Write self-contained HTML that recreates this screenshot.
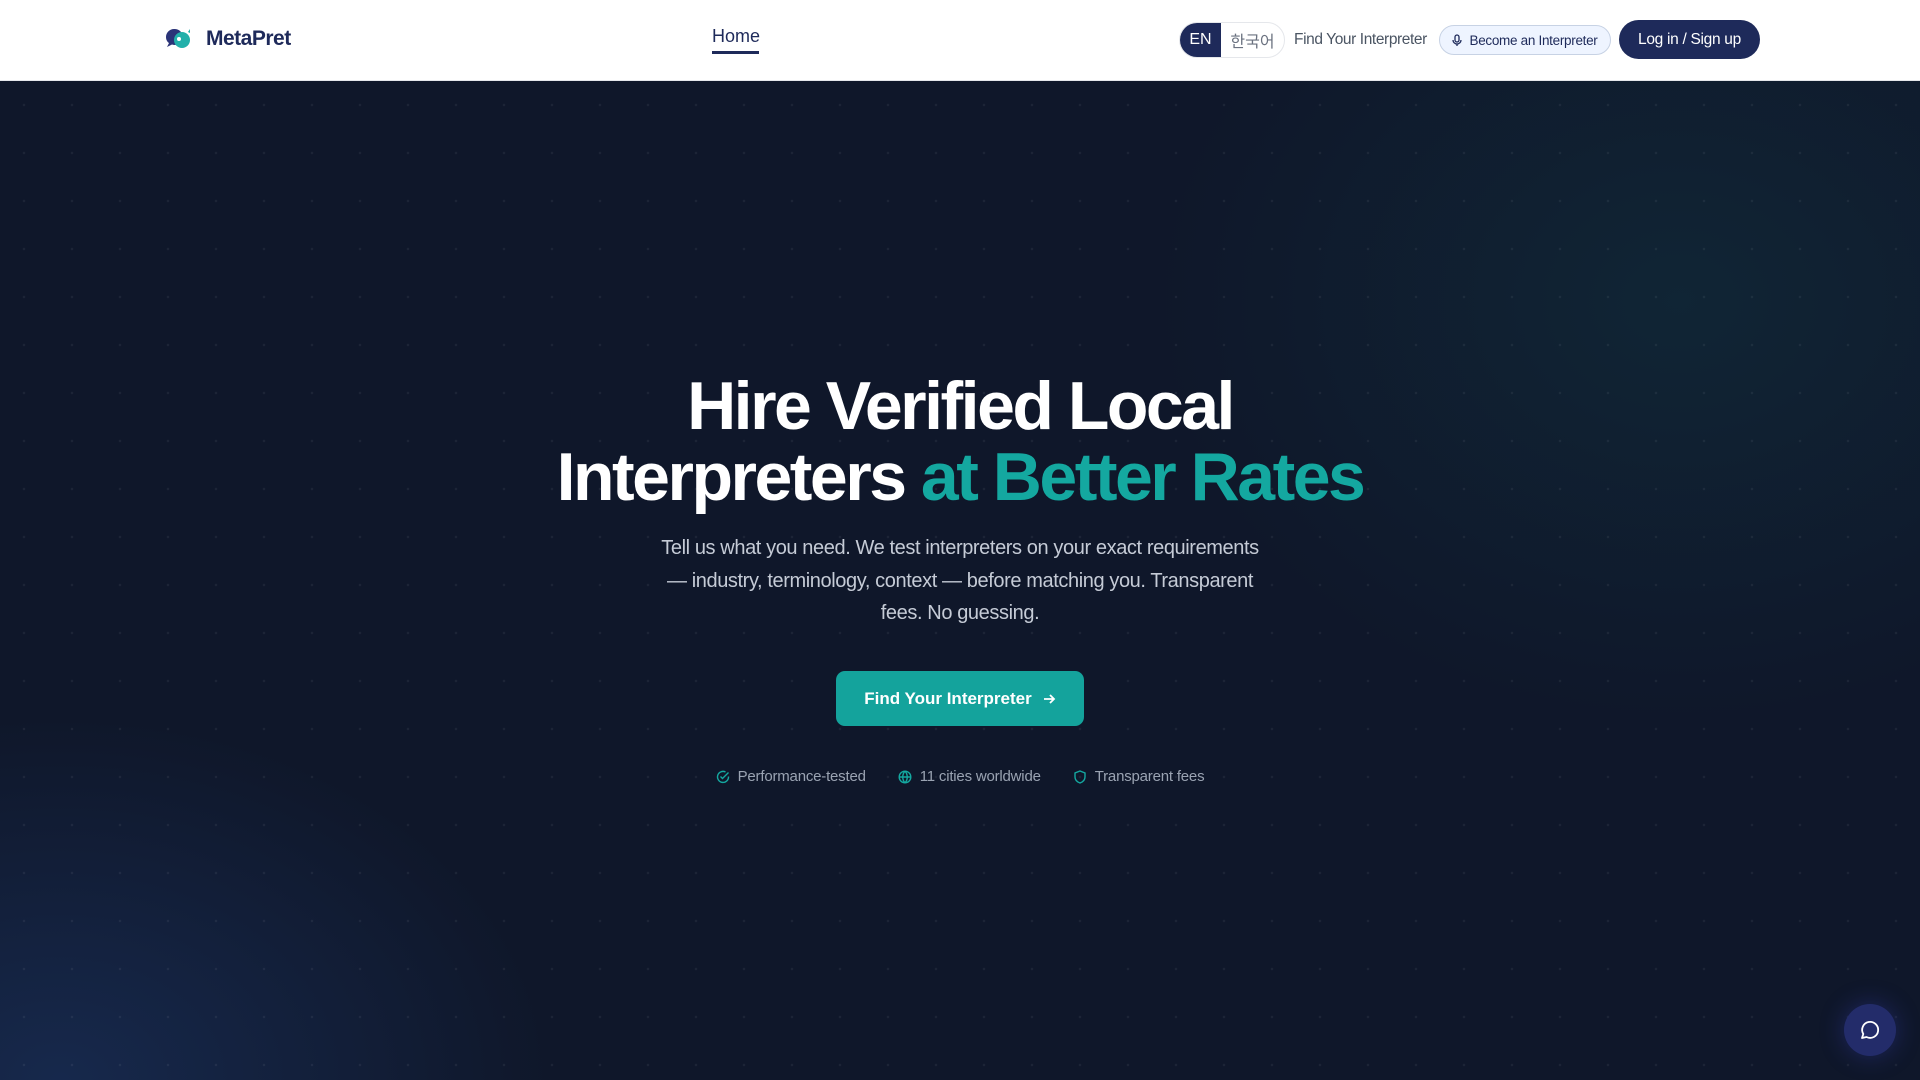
<!DOCTYPE html>
<html><head><meta charset="utf-8"><style>
*{margin:0;padding:0;box-sizing:border-box}
html,body{width:1920px;height:1080px;overflow:hidden;font-family:"Liberation Sans","Noto Sans CJK KR",sans-serif}
header{position:absolute;top:0;left:0;width:1920px;height:81px;background:#fff;border-bottom:1px solid #e5e7eb;z-index:2}
.hero{position:absolute;top:81px;left:0;width:1920px;height:999px;background:#0f172a;overflow:hidden}
.hero:before{content:"";position:absolute;inset:0;background:
radial-gradient(ellipse 700px 560px at 1680px 220px,rgba(20,110,110,.16),transparent 75%),
radial-gradient(ellipse 700px 520px at 60px 1000px,rgba(30,58,110,.5),transparent 70%);}
.hero:after{content:"";position:absolute;inset:0;background-image:radial-gradient(circle,rgba(255,255,255,.06) 1px,transparent 1.5px);background-size:48px 48px}
.abs{position:absolute}
h1{position:absolute;top:371px;left:0;width:1920px;text-align:center;color:#fff;font-size:68px;line-height:71px;font-weight:700;letter-spacing:-2.5px;z-index:1}
h1 span{color:#14a8a0}
p.sub{position:absolute;top:532px;left:560px;width:800px;text-align:center;color:#c5cbd6;font-size:20px;line-height:32.5px;letter-spacing:-.4px;z-index:1}
.btn{position:absolute;left:836px;top:671px;width:248px;height:55px;border-radius:9px;background:#14a39c;color:#fff;font-weight:700;font-size:17px;display:flex;align-items:center;justify-content:center;gap:10px;z-index:1}
.feat{position:absolute;top:768px;left:0;width:1920px;display:flex;justify-content:center;gap:32px;color:#9aa3b2;font-size:15px;letter-spacing:-.2px;z-index:1}
.feat div{display:flex;align-items:center;gap:8px}
</style></head><body>
<header>
<svg class="abs" style="left:164px;top:27px" width="28" height="24" viewBox="0 0 28 24"><path d="M10 2a8 8 0 0 0-8 8c0 3 1.5 5 3 6l-2 4 5-2.5A8 8 0 1 0 10 2z" fill="#2b3478"/><circle cx="18" cy="13" r="8" fill="#22b0aa"/><circle cx="15" cy="12" r="2" fill="#fff"/><path d="M24 5l2-3 0 4z" fill="#22b0aa"/></svg>
<div class="abs" style="left:206px;top:27px;font-size:21px;font-weight:700;color:#1e2a5a;letter-spacing:-.5px">MetaPret</div>
<div class="abs" style="left:712px;top:26px;font-size:18px;color:#1e2a5a">Home</div>
<div class="abs" style="left:712px;top:51px;width:47px;height:3px;background:#1e2a5a"></div>
<div class="abs" style="left:1179px;top:22px;width:106px;height:36px;border:1px solid #e5e7eb;border-radius:18px;overflow:hidden;display:flex;font-size:16px">
<div style="width:41px;background:#1e2a5a;color:#fff;display:flex;align-items:center;justify-content:center">EN</div>
<div style="flex:1;color:#6b7280;display:flex;align-items:center;justify-content:center">한국어</div></div>
<div class="abs" style="left:1294px;top:31px;font-size:15.5px;color:#4b5563;letter-spacing:-.4px">Find Your Interpreter</div>
<div class="abs" style="left:1439px;top:25px;width:172px;height:30px;border:1px solid #c7d2e4;background:#eef4ff;border-radius:15px;font-size:13.5px;color:#1e2a5a;display:flex;align-items:center;justify-content:center;gap:7px;letter-spacing:-.3px">
<svg width="10" height="13" viewBox="0 0 10 13" fill="none" stroke="#1e2a5a" stroke-width="1.3"><rect x="3" y="1" width="4" height="7" rx="2"/><path d="M1 6a4 4 0 0 0 8 0M5 10v2"/></svg>Become an Interpreter</div>
<div class="abs" style="left:1619px;top:20px;width:141px;height:39px;background:#1e2a5a;border-radius:20px;color:#fff;font-size:15.5px;display:flex;align-items:center;justify-content:center;letter-spacing:-.3px">Log in / Sign up</div>
</header>
<div class="hero"></div>
<h1>Hire Verified Local<br>Interpreters <span>at Better Rates</span></h1>
<p class="sub">Tell us what you need. We test interpreters on your exact requirements<br>— industry, terminology, context — before matching you. Transparent<br>fees. No guessing.</p>
<div class="btn">Find Your Interpreter <svg width="14" height="14" viewBox="0 0 14 14" fill="none" stroke="#fff" stroke-width="1.8"><path d="M2 7h10M8 3l4 4-4 4"/></svg></div>
<div class="feat">
<div><svg width="14" height="14" viewBox="0 0 14 14" fill="none" stroke="#14a8a0" stroke-width="1.4"><path d="M12.5 6.5A5.5 5.5 0 1 1 9.5 2"/><path d="M4.5 6.5l2 2 6-6"/></svg>Performance-tested</div>
<div><svg width="14" height="14" viewBox="0 0 14 14" fill="none" stroke="#14a8a0" stroke-width="1.4"><circle cx="7" cy="7" r="5.8"/><path d="M1.2 7h11.6M7 1.2c-3 3-3 8.6 0 11.6M7 1.2c3 3 3 8.6 0 11.6"/></svg>11 cities worldwide</div>
<div><svg width="14" height="14" viewBox="0 0 14 14" fill="none" stroke="#14a8a0" stroke-width="1.4"><path d="M7 1l5 2v4c0 3-2.3 5-5 6-2.7-1-5-3-5-6V3z"/></svg>Transparent fees</div>
</div>
<div class="abs" style="left:1844px;top:1004px;width:52px;height:52px;border-radius:50%;background:#232c6a;box-shadow:0 0 24px rgba(60,70,200,.35);display:flex;align-items:center;justify-content:center;z-index:1">
<svg width="22" height="22" viewBox="0 0 22 22" fill="none" stroke="#fff" stroke-width="1.8" stroke-linejoin="round"><path d="M3 19l1.3-4A8 8 0 1 1 7.5 18z"/></svg></div>
</body></html>
